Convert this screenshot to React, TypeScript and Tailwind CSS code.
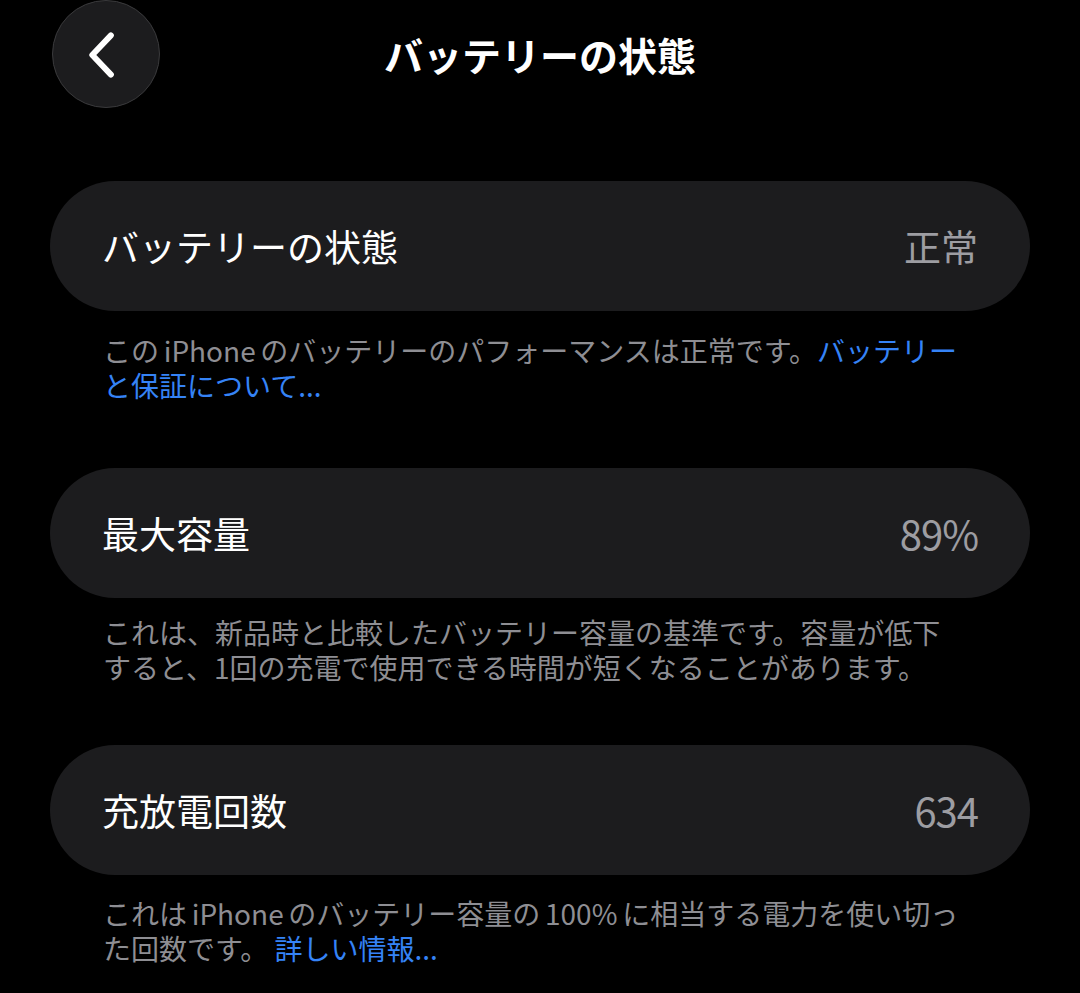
// Battery health screen (iOS settings, dark mode)

const FONT = { fontFamily: '"Noto Sans CJK JP", "Noto Sans", sans-serif' };

function BackButton() {
  return (
    <button className="w-[108px] h-[108px] rounded-full bg-[#1c1c1e] border border-[#3a3a3c] flex items-center justify-center">
      <svg width="108" height="108" viewBox="0 0 108 108" fill="none">
        <polyline
          points="59,35 40,55 59,75"
          stroke="white"
          strokeWidth="6"
          strokeLinecap="round"
          strokeLinejoin="round"
        />
      </svg>
    </button>
  );
}

function Row({ label, value, numeric }: { label: string; value: string; numeric?: boolean }) {
  return (
    <div className="h-[130px] rounded-full bg-[#1c1c1e] flex items-center justify-between px-[52px]">
      <span className="text-[37px] text-white leading-none">{label}</span>
      <span
        className={
          numeric
            ? "text-[40px] text-[#9d9da2] leading-none tracking-[-1px]"
            : "text-[37px] text-[#9d9da2] leading-none"
        }
      >
        {value}
      </span>
    </div>
  );
}

export default function App() {
  return (
    <div className="min-h-[993px] bg-black text-white overflow-hidden" style={FONT}>
      {/* header */}
      <div className="grid grid-cols-[1fr_auto_1fr] items-center h-[108px] px-[52px]">
        <div>
          <BackButton />
        </div>
        <h1 className="text-[39px] font-bold leading-none">バッテリーの状態</h1>
        <div />
      </div>

      <div className="px-[50px] mt-[73px]">
        <Row label="バッテリーの状態" value="正常" />
        <p className="mt-[22px] pl-[53px] text-[28px] leading-[35px] text-[#8e8e93] whitespace-nowrap">
          この{"\u2006"}iPhone{"\u2006"}のバッテリーのパフォーマンスは正常です。
          <span className="text-[#3583f6]">バッテリー</span>
          <br />
          <span className="text-[#3583f6]">と保証について...</span>
        </p>

        <div className="mt-[65px]">
          <Row label="最大容量" value="89%" numeric />
        </div>
        <p className="mt-[17px] pl-[53px] text-[28px] leading-[35px] text-[#8e8e93] whitespace-nowrap">
          これは、新品時と比較したバッテリー容量の基準です。容量が低下
          <br />
          すると、1回の充電で使用できる時間が短くなることがあります。
        </p>

        <div className="mt-[60px]">
          <Row label="充放電回数" value="634" numeric />
        </div>
        <p className="mt-[21px] pl-[53px] text-[28px] leading-[35px] text-[#8e8e93] whitespace-nowrap">
          これは{"\u2006"}iPhone{"\u2006"}のバッテリー容量の{"\u2006"}100%{"\u2006"}に相当する電力を使い切っ
          <br />
          た回数です。 <span className="text-[#3583f6]">詳しい情報...</span>
        </p>
      </div>
    </div>
  );
}
